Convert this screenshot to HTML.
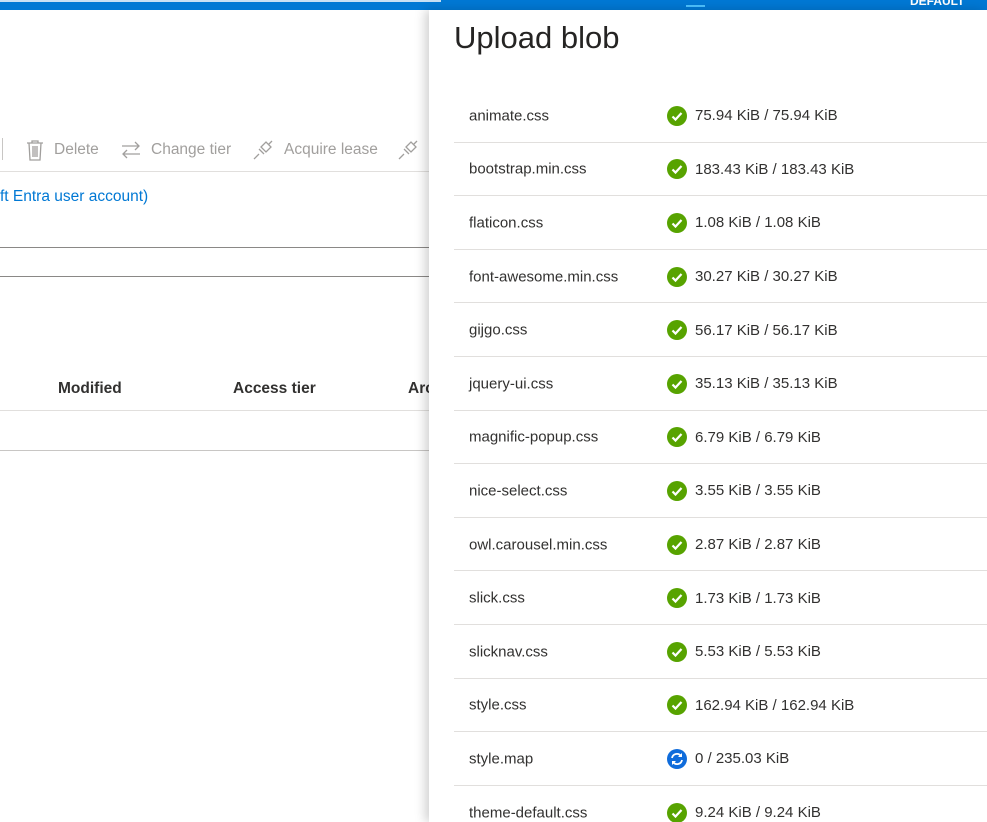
<!DOCTYPE html>
<html style="height:822px;overflow:hidden"><head><style>
body{margin:0;width:987px;height:822px;overflow:hidden;position:relative;font-family:"Segoe UI","Liberation Sans",sans-serif;background:#fff;color:#323130}
.abs{position:absolute}
.tb{color:#a19f9d;font-size:15.5px;top:141px}
.row{position:absolute;left:454px;width:533px;height:53.6px;border-bottom:1px solid #e1dfdd;font-size:15px}
.row .n{position:absolute;left:15px;top:calc(50% + 1px);transform:translateY(-50%)}
.row .s{position:absolute;left:213px;top:calc(50% + 1px);transform:translateY(-50%);display:flex;align-items:center}
.ic{width:20px;height:20px;border-radius:50%;background:#57a300;margin-right:8px;display:inline-block}
.ic.b{background:#0f6cdb}
</style></head><body>
<div class="abs" style="left:0;top:0;width:987px;height:10px;background:#0078d4"></div>
<div class="abs" style="left:0;top:0;width:441px;height:2px;background:#c7e0f4"></div>
<div class="abs" style="left:686px;top:5px;width:19px;height:2px;background:#4cc2ff"></div>
<div class="abs" style="left:910px;top:-6px;color:#fff;font-size:12px;font-weight:bold">DEFAULT DIR</div>
<div class="abs" style="left:2px;top:138px;width:1px;height:22px;background:#c8c6c4"></div>
<svg class="abs" style="left:25px;top:139px" width="20" height="22" viewBox="0 0 20 22" fill="none" stroke="#a19f9d" stroke-width="1.3"><path d="M2 4h16M7 4V2h6v2M4 4l1 17h10l1-17M8 7v11M10 7v11M12 7v11"/></svg>
<div class="abs tb" style="left:54px">Delete</div>
<svg class="abs" style="left:121px;top:141px" width="20" height="18" viewBox="0 0 20 18" fill="none" stroke="#a19f9d" stroke-width="1.3"><path d="M1 5h17M14 1l4 4-4 4M19 13H2M6 9l-4 4 4 4"/></svg>
<div class="abs tb" style="left:151px">Change tier</div>
<svg class="abs" style="left:253px;top:140px" width="20" height="20" viewBox="0 0 20 20" fill="none" stroke="#a19f9d" stroke-width="1.3"><path d="M1 19l5-5M19 1l-4 4M6 9l5 5M8 7l5-5 5 5-5 5z"/></svg>
<div class="abs tb" style="left:284px">Acquire lease</div>
<svg class="abs" style="left:398px;top:140px" width="20" height="20" viewBox="0 0 20 20" fill="none" stroke="#a19f9d" stroke-width="1.3"><path d="M1 19l5-5M19 1l-4 4M6 9l5 5M8 7l5-5 5 5-5 5z"/></svg>
<div class="abs" style="left:0;top:171px;width:429px;height:1px;background:#e1dfdd"></div>
<div class="abs" style="left:0;top:188px;font-size:15.5px;color:#0078d4">ft Entra user account)</div>
<div class="abs" style="left:0;top:247px;width:429px;height:1px;background:#8a8886"></div>
<div class="abs" style="left:0;top:276px;width:429px;height:1px;background:#8a8886"></div>
<div class="abs" style="left:58px;top:380px;font-size:15.5px;font-weight:600">Modified</div>
<div class="abs" style="left:233px;top:380px;font-size:15.5px;font-weight:600">Access tier</div>
<div class="abs" style="left:408px;top:380px;font-size:15.5px;font-weight:600">Arc</div>
<div class="abs" style="left:0;top:410px;width:429px;height:1px;background:#e1dfdd"></div>
<div class="abs" style="left:0;top:450px;width:429px;height:1px;background:#c8c6c4"></div>
<div class="abs" style="left:429px;top:10px;width:558px;height:812px;background:#fff;box-shadow:-4px 0 10px rgba(0,0,0,.18);overflow:hidden">
<div class="abs" style="left:25px;top:10px;font-size:31px;color:#252423">Upload blob</div>
<div id="rows" class="abs" style="left:-429px;top:-10px;width:987px;height:822px"></div>
</div>
<script>
var d=[["animate.css","75.94 KiB / 75.94 KiB"],["bootstrap.min.css","183.43 KiB / 183.43 KiB"],["flaticon.css","1.08 KiB / 1.08 KiB"],["font-awesome.min.css","30.27 KiB / 30.27 KiB"],["gijgo.css","56.17 KiB / 56.17 KiB"],["jquery-ui.css","35.13 KiB / 35.13 KiB"],["magnific-popup.css","6.79 KiB / 6.79 KiB"],["nice-select.css","3.55 KiB / 3.55 KiB"],["owl.carousel.min.css","2.87 KiB / 2.87 KiB"],["slick.css","1.73 KiB / 1.73 KiB"],["slicknav.css","5.53 KiB / 5.53 KiB"],["style.css","162.94 KiB / 162.94 KiB"],["style.map","0 / 235.03 KiB"],["theme-default.css","9.24 KiB / 9.24 KiB"]];
var h="";d.forEach(function(r,i){var top=88+i*53.6;var b=r[0]=="style.map";
var ic=b?'<svg class="ic b" viewBox="0 0 20 20" style="background:#0f6cdb"><path d="M5 9a5 5 0 0 1 9-2M15 11a5 5 0 0 1-9 2" stroke="#fff" stroke-width="1.8" fill="none"/><path d="M15 4v4h-4zM5 16v-4h4z" fill="#fff"/></svg>':'<svg class="ic" viewBox="0 0 20 20"><path d="M5.5 10.5l3 3 6-6.5" stroke="#fff" stroke-width="2.2" fill="none"/></svg>';
h+='<div class="row" style="top:'+top+'px"><span class="n">'+r[0]+'</span><span class="s">'+ic+r[1]+'</span></div>';});
document.getElementById("rows").innerHTML=h;
</script>
</body></html>
